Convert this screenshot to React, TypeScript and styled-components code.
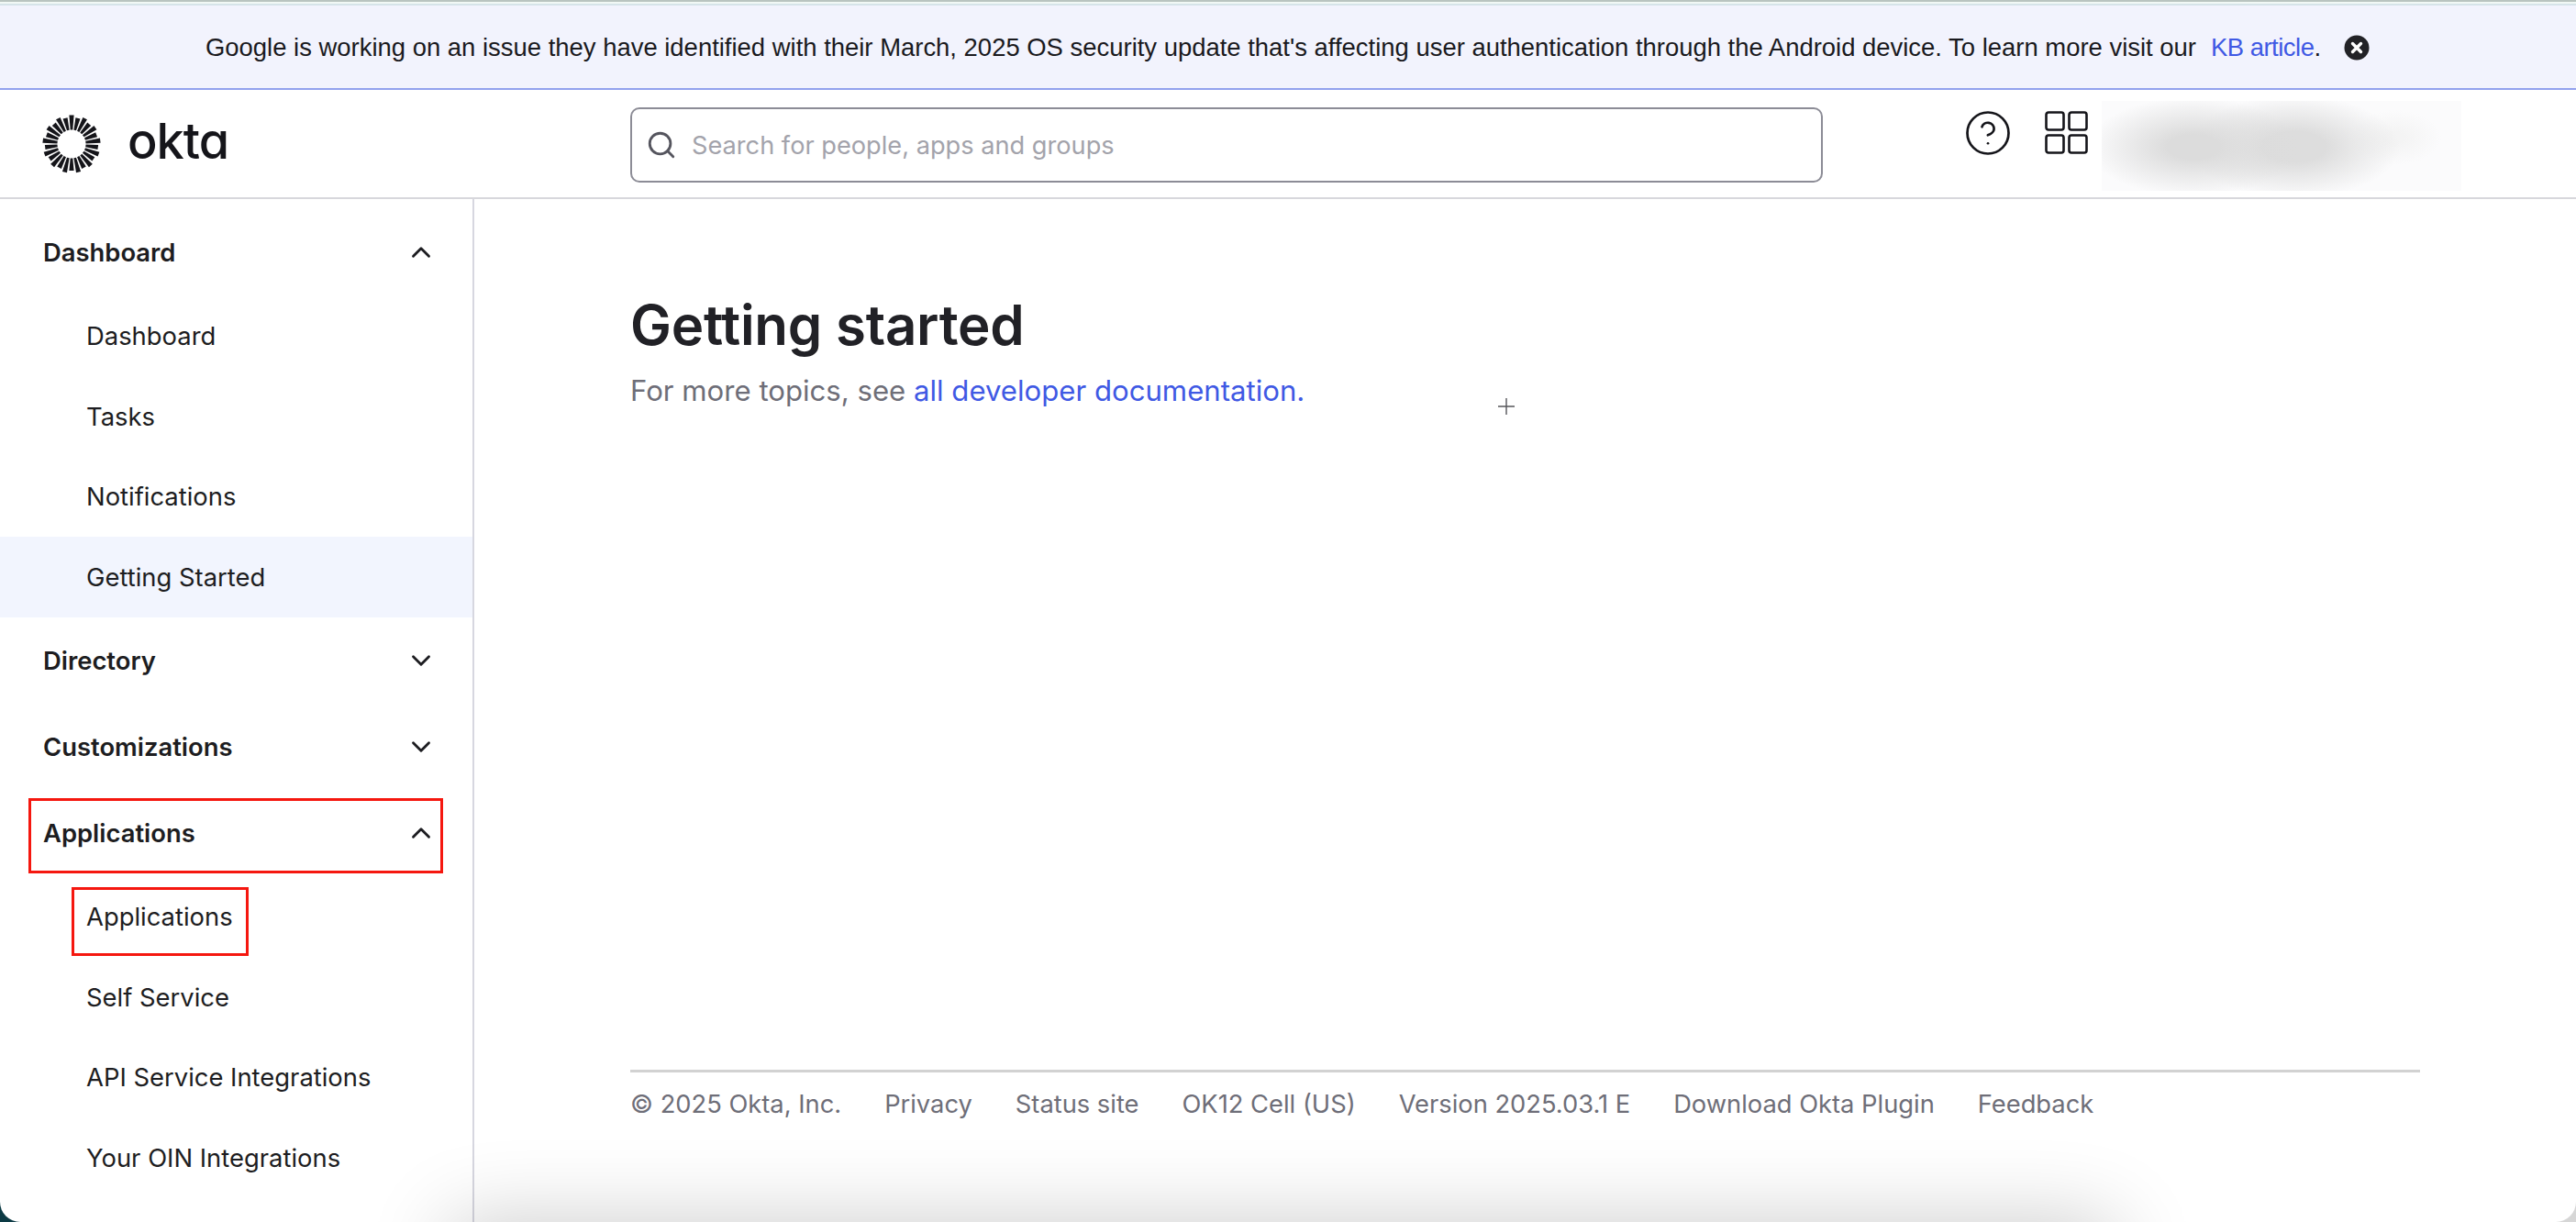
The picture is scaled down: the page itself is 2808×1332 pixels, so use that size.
import React from 'react';
import styled, { createGlobalStyle } from 'styled-components';
import { ChevronDown, ChevronUp, CircleHelp, Search } from 'lucide-react';

const GlobalStyle = createGlobalStyle`
  html, body {
    margin: 0;
    padding: 0;
    background: #fff;
    font-family: Inter, "Liberation Sans", sans-serif;
    color: #1d1d21;
  }
  * { box-sizing: border-box; }
`;

const Page = styled.div`
  width: 2808px;
  height: 1332px;
  background: linear-gradient(to right, #0c3a44 50%, #d6d6d6 50%);
`;

const Screen = styled.div`
  position: relative;
  display: flex;
  flex-direction: column;
  height: 100%;
  overflow: hidden;
  background: #fff;
  border-radius: 0 0 22px 22px;
`;

const TopStrip = styled.div`
  height: 6px;
  flex: none;
  background: linear-gradient(to bottom, #b9c4c0 0 2px, #f1f8f5 2px 4px, #d6e4e9 4px 6px);
`;

const Banner = styled.div`
  height: 92px;
  flex: none;
  display: flex;
  align-items: center;
  padding: 1px 0 0 224px;
  background: #f2f3fd;
  border-bottom: 2px solid #93a2ee;
  font-family: "Liberation Sans", Arial, sans-serif;
  font-size: 27.45px;
  color: #1a1a1e;
`;

const BannerLink = styled.a`
  margin-left: 16px;
  letter-spacing: -0.5px;
  color: #3f59e4;
`;

const BannerClose = styled.svg`
  width: 28px;
  height: 28px;
  margin-left: 25px;
`;

const Header = styled.header`
  height: 119px;
  flex: none;
  display: flex;
  align-items: flex-start;
  border-bottom: 2px solid #d7d7dc;
`;

const Brand = styled.div`
  width: 687px;
  height: 117px;
  display: flex;
  align-items: center;
  padding-left: 46px;
  gap: 29px;
`;

const Wordmark = styled.span`
  margin-bottom: 6px;
  font-family: Inter, sans-serif;
  font-feature-settings: "cv11";
  font-size: 54px;
  font-weight: 500;
  letter-spacing: -1px;
  line-height: 1;
  color: #15151a;
`;

const SearchBox = styled.div`
  width: 1300px;
  height: 82px;
  margin-top: 19px;
  display: flex;
  align-items: center;
  gap: 16px;
  padding-left: 15px;
  border: 2px solid #8c8c96;
  border-radius: 10px;
  font-size: 27.2px;
  color: #a3a3ab;
  svg { color: #55555e; }
`;

const HeaderIcons = styled.div`
  display: flex;
  align-items: center;
  margin: 23px 0 0 157px;
  gap: 39px;
  color: #15151a;
`;

const BlurredUser = styled.div`
  width: 392px;
  height: 98px;
  margin: 12px 0 0 15px;
  background:
    radial-gradient(ellipse 115px 54px at 100px 50px, #dcdcdc 25%, rgba(220, 220, 220, 0)),
    radial-gradient(ellipse 115px 56px at 210px 50px, #dddddd 30%, rgba(221, 221, 221, 0)),
    radial-gradient(ellipse 50px 30px at 320px 40px, #f4f4f4 20%, rgba(244, 244, 244, 0)),
    #fbfbfc;
`;

const Body = styled.div`
  flex: 1;
  min-height: 0;
  display: flex;
`;

const Sidebar = styled.nav`
  width: 517px;
  flex: none;
  padding-top: 11px;
  border-right: 2px solid #d7d7e0;
`;

const SectionRow = styled.div`
  position: relative;
  height: 94px;
  display: flex;
  align-items: center;
  justify-content: space-between;
  padding: 0 39px 0 47px;
  font-size: 27.4px;
  font-weight: 600;
  color: #1d1d21;
`;

const ChildRow = styled.div<{ $active?: boolean }>`
  position: relative;
  height: 87.75px;
  display: flex;
  align-items: center;
  padding-left: 94px;
  font-size: 27.4px;
  color: #1d1d21;
  background: ${p => (p.$active ? '#f2f5fe' : 'transparent')};
`;

const Callout = styled.span<{ $left: number; $top: number; $width: number; $height: number }>`
  position: absolute;
  left: ${p => p.$left}px;
  top: ${p => p.$top}px;
  width: ${p => p.$width}px;
  height: ${p => p.$height}px;
  border: 3px solid #f5170f;
`;

const Main = styled.main`
  position: relative;
  flex: 1;
  display: flex;
  flex-direction: column;
  padding: 0 170px;
`;

const Title = styled.h1`
  margin: 101px 0 0;
  font-size: 60px;
  font-weight: 600;
  line-height: 72px;
  letter-spacing: -0.25px;
  color: #212126;
`;

const Subtitle = styled.p`
  margin: 15px 0 0;
  font-size: 31.15px;
  line-height: 42px;
  color: #6e6e78;
`;

const DocLink = styled.a`
  color: #3f59e4;
`;

const Crosshair = styled.svg`
  position: absolute;
  left: 1115px;
  top: 216px;
  width: 20px;
  height: 20px;
`;

const Footer = styled.footer`
  height: 166px;
  margin-top: auto;
  padding-top: 16px;
  display: flex;
  gap: 47px;
  border-top: 3px solid #d2d2d2;
  font-size: 27.3px;
  line-height: 38px;
  color: #6e6e78;
`;

const BottomShadow = styled.div`
  position: absolute;
  left: 510px;
  right: 523px;
  top: 1350px;
  height: 60px;
  box-shadow: 0 0 90px 20px rgba(0, 0, 0, 0.2);
`;

const sunRays = Array.from({ length: 26 }, (_, i) => (i * 360) / 26);

const OktaSun = () => (
  <svg width="64" height="64" viewBox="-32 -32 64 64">
    {sunRays.map((angle, i) => (
      <polygon
        key={angle}
        points={`-1.3,-15.5 1.3,-15.5 2.6,${i % 2 ? -29 : -31.5} -2.6,${i % 2 ? -29 : -31.5}`}
        fill="#15151a"
        transform={`rotate(${angle})`}
      />
    ))}
  </svg>
);

const GridIcon = () => (
  <svg width="47" height="47" viewBox="0 0 47 47" fill="none" stroke="#15151a" strokeWidth="2.6">
    <rect x="1.5" y="1.5" width="19" height="19" rx="2.5" />
    <rect x="26.5" y="1.5" width="19" height="19" rx="2.5" />
    <rect x="1.5" y="26.5" width="19" height="19" rx="2.5" />
    <rect x="26.5" y="26.5" width="19" height="19" rx="2.5" />
  </svg>
);

const links = ['Privacy', 'Status site', 'OK12 Cell (US)', 'Version 2025.03.1 E', 'Download Okta Plugin', 'Feedback'];

export default function App() {
  return (
    <Page>
      <GlobalStyle />
      <Screen>
        <TopStrip />
        <Banner>
          Google is working on an issue they have identified with their March, 2025 OS security update that's affecting user authentication through the Android device. To learn more visit our
          <BannerLink>KB article</BannerLink>.
          <BannerClose viewBox="0 0 28 28">
            <circle cx="14" cy="14" r="13.5" fill="#222226" />
            <path d="M9.5 9.5l9 9M18.5 9.5l-9 9" stroke="#fff" strokeWidth="3.4" strokeLinecap="round" />
          </BannerClose>
        </Banner>
        <Header>
          <Brand>
            <OktaSun />
            <Wordmark>okta</Wordmark>
          </Brand>
          <SearchBox>
            <Search size={34} strokeWidth={2} />
            Search for people, apps and groups
          </SearchBox>
          <HeaderIcons>
            <CircleHelp size={54} strokeWidth={1.2} style={{ margin: '-4px' }} />
            <GridIcon />
          </HeaderIcons>
          <BlurredUser />
        </Header>
        <Body>
          <Sidebar>
            <SectionRow>
              Dashboard
              <ChevronUp size={34} strokeWidth={2} />
            </SectionRow>
            <ChildRow>Dashboard</ChildRow>
            <ChildRow>Tasks</ChildRow>
            <ChildRow>Notifications</ChildRow>
            <ChildRow $active>Getting Started</ChildRow>
            <SectionRow>
              Directory
              <ChevronDown size={34} strokeWidth={2} />
            </SectionRow>
            <SectionRow>
              Customizations
              <ChevronDown size={34} strokeWidth={2} />
            </SectionRow>
            <SectionRow>
              Applications
              <ChevronUp size={34} strokeWidth={2} />
              <Callout $left={31} $top={9} $width={452} $height={82} />
            </SectionRow>
            <ChildRow>
              Applications
              <Callout $left={78} $top={12} $width={193} $height={75} />
            </ChildRow>
            <ChildRow>Self Service</ChildRow>
            <ChildRow>API Service Integrations</ChildRow>
            <ChildRow>Your OIN Integrations</ChildRow>
          </Sidebar>
          <Main>
            <Title>Getting started</Title>
            <Subtitle>
              For more topics, see <DocLink>all developer documentation.</DocLink>
            </Subtitle>
            <Crosshair viewBox="0 0 20 20">
              <path d="M10 1v18M1 10h18" stroke="#55555a" strokeWidth="1.4" />
            </Crosshair>
            <Footer>
              <span>© 2025 Okta, Inc.</span>
              {links.map(link => (
                <span key={link}>{link}</span>
              ))}
            </Footer>
          </Main>
        </Body>
        <BottomShadow />
      </Screen>
    </Page>
  );
}
